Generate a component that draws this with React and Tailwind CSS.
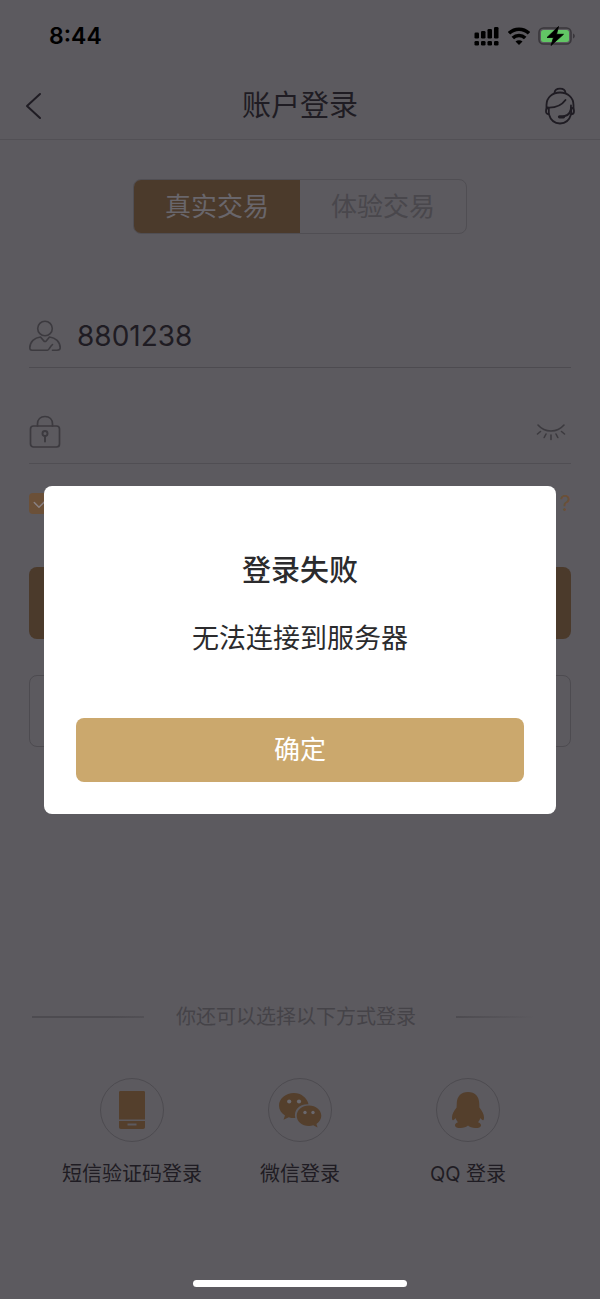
import React, { useState } from 'react';

const StatusBar = () => (
  <div className="flex items-center justify-between h-[72px] pl-[49px] pr-6 text-black">
    <span className="text-[23px] leading-none font-semibold">8:44</span>
    <div className="flex items-center gap-2">
      <svg width="26" height="20" viewBox="0 0 26 20" fill="currentColor" aria-hidden="true">
        <rect x="0.500" y="6.500" width="4.500" height="6" rx="1.300" />
        <rect x="7" y="5" width="4.500" height="7.500" rx="1.300" />
        <rect x="13.500" y="3" width="4.500" height="9.500" rx="1.300" />
        <rect x="20" y="1" width="4.500" height="11.500" rx="1.300" />
        <rect x="0.500" y="15" width="4.500" height="4.500" rx="1.300" />
        <rect x="7" y="15" width="4.500" height="4.500" rx="1.300" />
        <rect x="13.500" y="15" width="4.500" height="4.500" rx="1.300" />
        <rect x="20" y="15" width="4.500" height="4.500" rx="1.300" />
      </svg>
      <svg width="22" height="18" viewBox="0 0 22 18" fill="none" stroke="currentColor" strokeWidth="3.6" aria-hidden="true">
        <path d="M1 6.300a14.500 14.500 0 0 1 20 0" />
        <path d="M4.800 11a9 9 0 0 1 12.400 0" />
        <path d="M11 18 7.500 14.600a5 5 0 0 1 7 0Z" fill="currentColor" stroke="none" />
      </svg>
      <svg width="38" height="20" viewBox="0 0 38 20" aria-hidden="true">
        <rect x="1" y="2" width="32" height="16" rx="4.5" fill="none" stroke="#39363b" strokeWidth="1.6" />
        <rect x="3" y="4" width="28" height="12" rx="2.5" fill="#62c665" />
        <path d="M35 7.5c2.4.8 2.4 4.2 0 5Z" fill="#39363b" />
        <path d="M20.500.5 9 11.500h6.500L13 19.500 25.500 8.300H18.500Z" fill="#000" stroke="#000" strokeWidth="0.8" strokeLinejoin="round" />
      </svg>
    </div>
  </div>
);

const HeadsetIcon = () => (
  <svg width="30" height="38" viewBox="0 0 30 38" fill="none" stroke="currentColor" strokeWidth="1.8" strokeLinecap="round" strokeLinejoin="round" aria-hidden="true">
    <path d="M9.500 5.800c.6-5.600 10.400-5.600 11 0" />
    <path d="M1.500 21V18C1.500 10.200 7.600 5.500 15 5.500S28.500 10.200 28.500 18v3" />
    <path d="M2 20.500c8.500.6 14.500-2 18.500-7.500" />
    <path d="M3.800 21v6H3C1.600 27 1 25.600 1 24s.6-3 2-3ZM26.200 21v6h.8c1.400 0 2-1.400 2-3s-.6-3-2-3Z" />
    <path d="M3.800 27c1.700 5.800 5.700 9.500 11.200 9.500s9.500-3.700 11.200-9.500" />
    <path d="M26 18.500c.5 6.500-1.500 10-7.500 11" />
    <path d="M14.500 29.800h4" strokeWidth="3.200" />
  </svg>
);

const UserIcon = () => (
  <svg width="32" height="32" viewBox="0 0 32 32" fill="none" stroke="currentColor" strokeWidth="1.6" strokeLinecap="round" strokeLinejoin="round" aria-hidden="true">
    <circle cx="16" cy="8.500" r="7.300" />
    <path d="M23.500 30.200H28c1.700 0 3.200-.6 3.200-2.200 0-6.200-4.700-10.400-10.700-11l-3.300 3.900c-.7.800-1.700.8-2.400 0L11.500 17C5.500 17.600.8 21.800.8 28c0 1.600.8 2.200 2.200 2.200h15.500c1.800 0 2-3.200 5-5.700" />
  </svg>
);

const LockIcon = () => (
  <svg width="32" height="34" viewBox="0 0 32 34" fill="none" stroke="currentColor" strokeWidth="1.7" strokeLinecap="round" aria-hidden="true">
    <rect x="1.500" y="11" width="29" height="21" rx="3" />
    <path d="M8.500 11V9c0-4.400 3-7.500 7.500-7.500s7.500 3.100 7.500 7.500v2" />
    <circle cx="16" cy="18.500" r="2.500" strokeWidth="1.900" />
    <path d="M16 21v5.500" strokeWidth="1.900" />
  </svg>
);

const ClosedEyeIcon = () => (
  <svg width="30" height="18" viewBox="0 0 30 18" fill="none" stroke="currentColor" strokeWidth="1.6" strokeLinecap="round" aria-hidden="true">
    <path d="M2 2c7 8 19 8 26 0" />
    <path d="M4.500 8.500 1.500 11M10 11l-1.800 3.500M15 12v4.500M20 11l1.800 3.500M25.500 8.500l3 2.500" />
  </svg>
);

const PhoneIcon = () => (
  <svg width="28" height="40" viewBox="0 0 28 40" fill="currentColor" aria-hidden="true">
    <path d="M2.500 1h23C26.500 1 27 1.500 27 2.500V29.500H1V2.500C1 1.500 1.500 1 2.500 1Z" />
    <path fillRule="evenodd" d="M1 31h26V37c0 1.300-.7 2-2 2H3c-1.300 0-2-.7-2-2ZM9.500 33.500v2h9v-2Z" />
  </svg>
);

const WechatIcon = () => (
  <svg width="44" height="36" viewBox="0 0 44 36" fill="currentColor" aria-hidden="true">
    <path d="M16 1C7.700 1 1 6.600 1 13.600c0 4.200 2.300 7.600 6 9.900l-1.500 4.300 5.200-2.500c1.900.6 3.400.8 5.300.8h1.300C15.300 18 21.500 11.700 30.500 12.200 29 5.700 23 1 16 1Z" />
    <path d="M31 13.500c-7 0-12.300 4.600-12.300 10.200S24 34 31 34c1.500 0 2.900-.3 4.300-.7l4.300 2.200-1.200-3.600c3-2.200 4.900-5 4.900-8.200C43.300 18.100 37.800 13.500 31 13.500Z" />
    <g fill="#6a686d">
      <circle cx="11.200" cy="9.500" r="2.100" />
      <circle cx="21" cy="9.500" r="2.100" />
      <circle cx="27" cy="20.500" r="1.700" />
      <circle cx="35" cy="20.500" r="1.700" />
    </g>
  </svg>
);

const QQIcon = () => (
  <svg width="34" height="38" viewBox="0 0 34 38" fill="currentColor" aria-hidden="true">
    <path d="M17 1C10 1 6 5.500 5.800 12L5.600 16.500C3 19.500 1 23.500 1 26.500c0 1.800.4 3 1.200 2.700.9-.3 1.800-1.200 2.500-2.200.4 1.700 1.200 3 2.300 4.200-1.700.5-3 1.500-3 3 0 2 2.500 2.800 5.500 2.800 3.300 0 6-.8 7.500-2.400 1.500 1.600 4.200 2.400 7.500 2.400 3 0 5.500-.8 5.500-2.800 0-1.500-1.300-2.500-3-3 1.100-1.200 1.900-2.500 2.300-4.200.7 1 1.600 1.900 2.500 2.200.8.300 1.200-.9 1.200-2.700 0-3-2-7-4.600-10L28.200 12C28 5.500 24 1 17 1Z" />
  </svg>
);

const loginMethods = [
  { id: 'sms', label: '短信验证码登录', icon: PhoneIcon },
  { id: 'wechat', label: '微信登录', icon: WechatIcon },
  { id: 'qq', label: 'QQ 登录', icon: QQIcon },
];

const ErrorDialog = ({ onClose }) => (
  <div className="fixed inset-0 z-10 flex items-center justify-center px-11">
    <div role="alertdialog" aria-modal="true" aria-labelledby="dialog-title" aria-describedby="dialog-message" className="w-full max-w-lg rounded-lg bg-white px-8 pt-[65px] pb-8 text-center text-[#2b2b2d]">
      <h2 id="dialog-title" className="text-[29px] leading-10 font-medium">登录失败</h2>
      <p id="dialog-message" className="mt-7 text-[27px] leading-10">无法连接到服务器</p>
      <button type="button" onClick={onClose} className="mt-[59px] h-16 w-full rounded-lg bg-[#cba86d] text-[26px] text-white">
        确定
      </button>
    </div>
  </div>
);

const App = () => {
  const [account, setAccount] = useState('8801238');
  const [password, setPassword] = useState('');
  const [remember, setRemember] = useState(true);
  const [showError, setShowError] = useState(true);

  const handleSubmit = (e) => {
    e.preventDefault();
    setShowError(true);
  };

  return (
    <div className="flex min-h-screen flex-col bg-[#5c5a5f] font-[Inter,'Noto_Sans_CJK_SC',sans-serif] text-[#1f1c23]">
      <StatusBar />

      {/* Header */}
      <header className="flex h-17 items-center justify-between border-b border-[#525055] px-6">
        <button type="button" aria-label="返回" className="w-8">
          <svg width="18" height="28" viewBox="0 0 18 28" fill="none" stroke="currentColor" strokeWidth="2" strokeLinecap="round" strokeLinejoin="round" aria-hidden="true">
            <path d="M16 2 3 14l13 12" />
          </svg>
        </button>
        <h1 className="text-[29px] leading-10">账户登录</h1>
        <button type="button" aria-label="客服" className="flex w-8 justify-center">
          <HeadsetIcon />
        </button>
      </header>

      {/* Account type */}
      <div className="mx-auto mt-[39px] flex h-[55px] w-[334px] overflow-hidden rounded-lg border border-[#504e53] text-[26px]">
        <button type="button" className="flex-1 bg-[#4b3a2b] text-[#69666b]">真实交易</button>
        <button type="button" className="flex-1 text-[#49474c]">体验交易</button>
      </div>

      <form onSubmit={handleSubmit} className="flex flex-col px-[29px] pt-[70px]">
        <label className="flex h-16 items-center gap-4 border-b border-[#4d4b50]">
          <span className="text-[#3c3a3f]"><UserIcon /></span>
          <input
            type="text"
            value={account}
            aria-label="账号"
            className="min-w-0 flex-1 text-[28px] outline-none"
            onChange={(e) => setAccount(e.target.value)}
          />
        </label>
        <div className="mt-8 flex h-16 items-center gap-4 border-b border-[#504e53] text-[#3c3a3f]">
          <LockIcon />
          <input
            type="password"
            value={password}
            aria-label="密码"
            className="min-w-0 flex-1 text-[28px] outline-none"
            onChange={(e) => setPassword(e.target.value)}
          />
          <button type="button" aria-label="显示密码" className="pr-[5px]">
            <ClosedEyeIcon />
          </button>
        </div>

        <div className="mt-[23px] flex h-8 items-center justify-between text-[22px]">
          <label className="flex items-center gap-2">
            <span className="grid">
              <input
                type="checkbox"
                checked={remember}
                className="col-start-1 row-start-1 size-[21px] appearance-none rounded-sm bg-[#6b5038]"
                onChange={(e) => setRemember(e.target.checked)}
              />
              {remember && (
                <svg viewBox="0 0 20 20" className="pointer-events-none col-start-1 row-start-1 size-[21px]" fill="none" stroke="#8a8284" strokeWidth="1.4" strokeLinecap="round" strokeLinejoin="round" aria-hidden="true">
                  <path d="m5 9 4.500 4.500L15 8" />
                </svg>
              )}
            </span>
            记住账号
          </label>
          <a href="#forgot" className="text-[#6b5038]">忘记密码 ?</a>
        </div>

        <button type="submit" className="mt-12 h-18 rounded-lg bg-[#4b3a2b] text-[26px] text-[#69666b]">登录</button>
        <button type="button" className="mt-9 h-18 rounded-lg border border-[#4d4b50] text-[26px]">开户</button>
      </form>

      {/* Other ways to log in */}
      <section className="mt-auto">
        <div className="flex items-center px-8">
          <span className="h-0.5 flex-1 bg-linear-to-r from-[#4d4b50] from-70% to-[#525055]" />
          <p className="mr-10 ml-8 text-[20px] leading-8 text-[#454348]">你还可以选择以下方式登录</p>
          <span className="h-0.5 flex-1 bg-linear-to-r from-[#4d4b50] to-transparent to-70%" />
        </div>
        <div className="mt-[45px] grid grid-cols-3 px-12">
          {loginMethods.map(({ id, label, icon: Icon }) => (
            <button key={id} type="button" className="flex flex-col items-center gap-4 text-[20px] leading-8 whitespace-nowrap">
              <span className="flex size-16 items-center justify-center rounded-full border border-[#4d4b50] text-[#543f2c]">
                <Icon />
              </span>
              {label}
            </button>
          ))}
        </div>
      </section>

      <div className="mx-auto mt-[90px] mb-3 h-[7px] w-[214px] rounded-full bg-white" />

      {showError && <ErrorDialog onClose={() => setShowError(false)} />}
    </div>
  );
};

export default App;
